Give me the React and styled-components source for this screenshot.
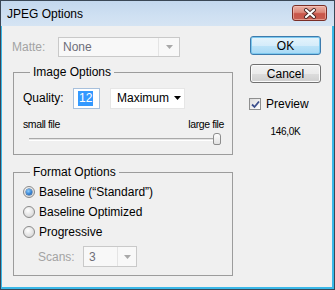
import React from 'react';
import styled, { createGlobalStyle } from 'styled-components';

const Global = createGlobalStyle`
  html, body { margin: 0; padding: 0; background: #ffffff; }
  body {
    font-family: "Liberation Sans", Arial, sans-serif;
    font-size: 12px;
    color: #000;
  }
  * { box-sizing: border-box; }
`;

const Window = styled.div`
  width: 335px;
  height: 290px;
  border: 1px solid #3a4756;
  background: #3ab8e8;
  display: flex;
  flex-direction: column;
`;

const TitleBar = styled.div`
  height: 25px;
  flex: none;
  display: flex;
  justify-content: space-between;
  align-items: flex-start;
  background: linear-gradient(#c3d8ee, #cfe0f2 60%, #d5e4f3);
  padding: 0 7px 0 6px;
`;

const Title = styled.div`
  font-family: "Liberation Sans", Arial, sans-serif;
  font-size: 12px;
  line-height: 14px;
  margin-top: 6px;
  color: #000;
`;

const CloseButton = styled.div`
  width: 35px;
  height: 16px;
  margin-top: 4px;
  border: 1px solid #7a2e26;
  border-radius: 3px;
  background: linear-gradient(#eab0a4 0%, #dc8a7c 45%, #c9564a 55%, #c65f52 100%);
  box-shadow: inset 0 0 0 1px rgba(255, 210, 200, 0.5);
  display: flex;
  align-items: center;
  justify-content: center;
`;

const Body = styled.div`
  flex: 1;
  margin: 0 2px 2px 1px;
  background: #f0f0f0;
  display: grid;
  grid-template-columns: 220px 71px;
  column-gap: 17px;
  align-content: start;
  padding: 11px 0 0 11px;
`;

const LeftColumn = styled.div`
  display: flex;
  flex-direction: column;
`;

const RightColumn = styled.div`
  display: flex;
  flex-direction: column;
  margin-top: -1px;
`;

const Row = styled.div`
  display: flex;
  align-items: center;
  height: ${p => p.$h || 20}px;
  margin-top: ${p => p.$mt || 0}px;
  margin-left: ${p => p.$ml || 0}px;
`;

const Label = styled.span`
  width: ${p => (p.$w ? `${p.$w}px` : 'auto')};
  flex: none;
  color: ${p => (p.$disabled ? '#a3a3a3' : '#000')};
  line-height: 14px;
  white-space: nowrap;
`;

const Select = styled.div`
  display: flex;
  align-items: stretch;
  width: ${p => p.$w}px;
  height: ${p => p.$h}px;
  margin-left: ${p => p.$ml || 0}px;
  border: 1px solid ${p => (p.$disabled ? '#c9c9c9' : '#e6e6e6')};
  background: ${p => (p.$disabled ? '#f8f8f8' : '#ffffff')};
  color: ${p => (p.$disabled ? '#6e6e78' : '#000')};
`;

const SelectValue = styled.div`
  flex: 1;
  display: flex;
  align-items: center;
  padding-left: ${p => p.$pl || 4}px;
  line-height: 14px;
  ${p => p.$disabled && 'border-right: 1px solid #e4e4e4;'}
`;

const SelectArrow = styled.div`
  width: ${p => p.$w}px;
  flex: none;
  display: flex;
  align-items: center;
  justify-content: center;
`;

const Group = styled.fieldset`
  margin: ${p => p.$mt}px 0 0 0;
  padding: 0 8px ${p => p.$pb}px 9px;
  border: 1px solid #9c9c9c;
  min-width: 0;
`;

const Legend = styled.legend`
  margin-left: 7px;
  padding: 0 3px;
  line-height: 16px;
  font-size: 12px;
`;

const TextInput = styled.div`
  width: 27px;
  height: 21px;
  border: 1px solid #a7c0dc;
  background: #fff;
  display: flex;
  align-items: center;
  padding-left: 4px;
`;

const Selected = styled.span`
  background: #3399ff;
  color: #fff;
  line-height: 15px;
  padding: 0 1px;
`;

const SliderLabels = styled.div`
  display: flex;
  justify-content: space-between;
  margin-top: 8px;
  line-height: 14px;
  font-size: 10.5px;
  letter-spacing: -0.4px;
`;

const SliderRow = styled.div`
  position: relative;
  height: 12px;
  margin: 2px 0 0 6px;
  width: 192px;
`;

const Track = styled.div`
  position: absolute;
  left: 0;
  right: 2px;
  top: 5px;
  height: 3px;
  border-top: 1px solid #a9a9a9;
  border-bottom: 1px solid #ffffff;
  background: #e4e4e4;
`;

const Thumb = styled.div`
  position: absolute;
  left: 184px;
  top: 0;
  width: 8px;
  height: 12px;
  border: 1px solid #8d8d8d;
  border-radius: 3px 3px 2px 2px;
  background: linear-gradient(#fdfdfd, #e2e2e2);
`;

const RadioRow = styled.div`
  display: flex;
  align-items: center;
  height: 20px;
  gap: 4px;
  margin-top: ${p => p.$mt || 0}px;
`;

const Radio = styled.span`
  width: 12px;
  height: 12px;
  border-radius: 50%;
  border: 1px solid #8a8a8a;
  background: radial-gradient(circle at 40% 35%, #ffffff, #dcdcdc 70%, #cfcfcf);
  display: flex;
  align-items: center;
  justify-content: center;
  flex: none;
`;

const RadioDot = styled.span`
  width: 6px;
  height: 6px;
  border-radius: 50%;
  background: radial-gradient(circle at 40% 35%, #8fd0ff, #1f6fc8 70%, #0f4e9c);
  box-shadow: 0 0 0 0.5px #1c4f8a;
`;

const Button = styled.div`
  width: 71px;
  height: 19px;
  margin-top: ${p => p.$mt || 0}px;
  border: 1px solid ${p => (p.$default ? '#3d7bad' : '#707070')};
  border-radius: 3px;
  background: ${p =>
    p.$default
      ? 'linear-gradient(#e5f4fc 0%, #d5ecfa 50%, #bde3f8 51%, #a7d9f5 100%)'
      : 'linear-gradient(#f2f2f2 0%, #ebebeb 50%, #dddddd 51%, #cfcfcf 100%)'};
  box-shadow: inset 0 0 0 1px ${p => (p.$default ? '#7cc8ee' : '#fbfbfb')};
  display: flex;
  align-items: center;
  justify-content: center;
  font-size: 12px;
  line-height: 14px;
`;

const CheckRow = styled.div`
  display: flex;
  align-items: center;
  height: 16px;
  gap: 5px;
  margin-top: 13px;
  margin-left: -1px;
  font-size: 12px;
`;

const CheckBox = styled.span`
  width: 12px;
  height: 12px;
  border: 1px solid #8e8f8f;
  background: linear-gradient(135deg, #dcdcdc, #ffffff);
  display: flex;
  align-items: center;
  justify-content: center;
  flex: none;
`;

const SizeText = styled.div`
  margin-top: 14px;
  text-align: center;
  font-size: 10px;
  letter-spacing: -0.3px;
  line-height: 12px;
`;

const DisabledArrow = () => (
  <svg width="7" height="4" viewBox="0 0 7 4">
    <path d="M0 0 H7 L3.5 4 Z" fill="#a8a8a8" />
  </svg>
);

const BlackArrow = () => (
  <svg width="7" height="4" viewBox="0 0 7 4">
    <path d="M0 0 H7 L3.5 4 Z" fill="#000" />
  </svg>
);

export default function App() {
  return (
    <>
      <Global />
      <Window>
        <TitleBar>
          <Title>JPEG Options</Title>
          <CloseButton>
            <svg width="14" height="11" viewBox="0 0 14 11">
              <path d="M3 2 L11 9 M11 2 L3 9" stroke="#4a2a28" strokeWidth="4" strokeLinecap="round" />
              <path d="M3 2 L11 9 M11 2 L3 9" stroke="#ffffff" strokeWidth="2.2" strokeLinecap="round" />
            </svg>
          </CloseButton>
        </TitleBar>
        <Body>
          <LeftColumn>
            <Row $h={20} $ml={-1}>
              <Label $w={46} $disabled>Matte:</Label>
              <Select $w={122} $h={20} $disabled>
                <SelectValue $disabled>None</SelectValue>
                <SelectArrow $w={20}><DisabledArrow /></SelectArrow>
              </Select>
            </Row>

            <Group $mt={7} $pb={9}>
              <Legend>Image Options</Legend>
              <Row $h={22} $mt={7}>
                <Label $w={50}>Quality:</Label>
                <TextInput><Selected>12</Selected></TextInput>
                <Select $w={75} $h={21} $ml={10}>
                  <SelectValue $pl={6}>Maximum</SelectValue>
                  <SelectArrow $w={17}><BlackArrow /></SelectArrow>
                </Select>
              </Row>
              <SliderLabels>
                <span>small file</span>
                <span>large file</span>
              </SliderLabels>
              <SliderRow>
                <Track />
                <Thumb />
              </SliderRow>
            </Group>

            <Group $mt={9} $pb={8}>
              <Legend>Format Options</Legend>
              <RadioRow $mt={2}>
                <Radio><RadioDot /></Radio>
                <span>Baseline (&ldquo;Standard&rdquo;)</span>
              </RadioRow>
              <RadioRow>
                <Radio />
                <span>Baseline Optimized</span>
              </RadioRow>
              <RadioRow>
                <Radio />
                <span>Progressive</span>
              </RadioRow>
              <Row $h={21} $mt={4} $ml={15}>
                <Label $w={45} $disabled>Scans:</Label>
                <Select $w={54} $h={21} $disabled>
                  <SelectValue $disabled $pl={5}>3</SelectValue>
                  <SelectArrow $w={18}><DisabledArrow /></SelectArrow>
                </Select>
              </Row>
            </Group>
          </LeftColumn>

          <RightColumn>
            <Button $default>OK</Button>
            <Button $mt={9}>Cancel</Button>
            <CheckRow>
              <CheckBox>
                <svg width="9" height="9" viewBox="0 0 9 9">
                  <path d="M1 4.5 L3.5 7 L8 1.5" stroke="#3c4f8c" strokeWidth="1.8" fill="none" />
                </svg>
              </CheckBox>
              <span>Preview</span>
            </CheckRow>
            <SizeText>146,0K</SizeText>
          </RightColumn>
        </Body>
      </Window>
    </>
  );
}
